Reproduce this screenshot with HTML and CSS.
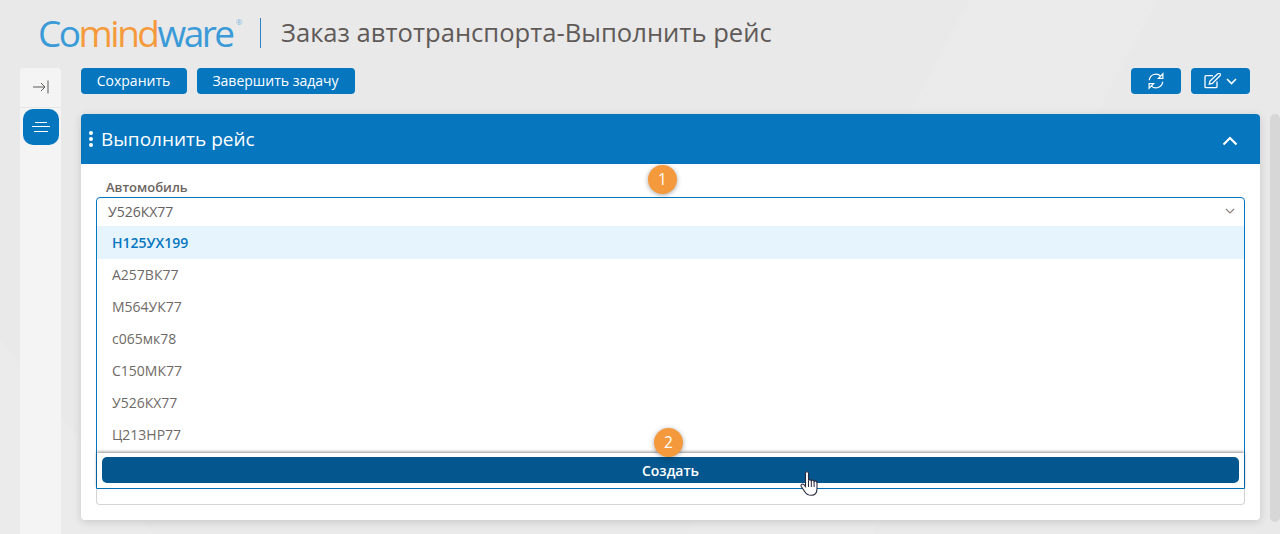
FILE: index.html
```html
<!DOCTYPE html>
<html lang="ru">
<head>
<meta charset="utf-8">
<title>Заказ автотранспорта-Выполнить рейс</title>
<link rel="stylesheet" href="styles.css">
</head>
<body>
<header class="header">
  <div class="logo"><span class="logo-blue">Co</span><span class="logo-orange">mind</span><span class="logo-blue">ware</span><sup class="logo-reg">®</sup></div>
  <div class="divider"></div>
  <h1 class="page-title">Заказ автотранспорта-Выполнить рейс</h1>
</header>
<div class="workspace">
  <aside class="sidebar">
    <button class="side-toggle" aria-label="Развернуть">
      <svg width="16" height="14" viewBox="0 0 16 14"><path d="M0 7h12M8 3l4 4-4 4M15 .5v13" fill="none" stroke="#5f5a58" stroke-width="1"/></svg>
    </button>
    <button class="side-active" aria-label="Меню">
      <svg width="18" height="12" viewBox="0 0 18 12"><path d="M3 1.500h12M0 5.500h18M2 10.500h14" fill="none" stroke="#fff" stroke-width="1"/></svg>
    </button>
  </aside>
  <main class="content">
    <div class="toolbar">
      <div class="toolbar-group">
        <button class="btn btn-save">Сохранить</button>
        <button class="btn btn-finish">Завершить задачу</button>
      </div>
      <div class="toolbar-group">
        <button class="btn btn-icon" aria-label="Обновить">
          <svg width="18" height="18" viewBox="0 0 18 18" fill="none" stroke="#fff" stroke-width="1.200"><path d="M2.300 8.200A6.700 6.700 0 0 1 13.800 4.200L15.300 6"/><path d="M15.900 1.800V6.300h-4.500z" fill="#0676bf"/><path d="M15.700 9.800A6.700 6.700 0 0 1 4.200 13.800L2.700 12"/><path d="M2.100 16.200V11.700h4.500z" fill="#0676bf"/></svg>
        </button>
        <button class="btn btn-edit" aria-label="Правка">
          <svg width="18" height="16" viewBox="0 0 18 16" fill="none" stroke="#fff" stroke-width="1.300"><path d="M13 8.500v5.200a1 1 0 0 1-1 1H2a1 1 0 0 1-1-1v-10a1 1 0 0 1 1-1h7"/><path d="M6 8l-.8 3.200L8.400 10.400 16 2.800a1.500 1.500 0 0 0-2.200-2.100z"/></svg>
          <svg width="11" height="7" viewBox="0 0 11 7" fill="none" stroke="#fff" stroke-width="1.600"><path d="M1 1l4.500 4.500L10 1"/></svg>
        </button>
      </div>
    </div>
    <section class="panel">
      <div class="panel-head">
        <div class="panel-title-wrap">
          <span class="grip"><i></i><i></i><i></i></span>
          <h2 class="panel-title">Выполнить рейс</h2>
        </div>
        <svg class="panel-chevron" width="16" height="10" viewBox="0 0 16 10" fill="none" stroke="#fff" stroke-width="2.200"><path d="M1.500 8.500L8 2l6.500 6.500"/></svg>
      </div>
      <div class="panel-body">
        <label class="field-label">Автомобиль</label>
        <div class="combo">
          <div class="combo-input">
            <span>У526КХ77</span>
            <svg width="10" height="6" viewBox="0 0 10 6" fill="none" stroke="#8a7f78" stroke-width="1.100"><path d="M1 1l4 4 4-4"/></svg>
          </div>
          <ul class="options">
            <li class="option option-active">Н125УХ199</li>
            <li class="option">А257ВК77</li>
            <li class="option">М564УК77</li>
            <li class="option">с065мк78</li>
            <li class="option">С150МК77</li>
            <li class="option">У526КХ77</li>
            <li class="option">Ц213НР77</li>
          </ul>
          <div class="combo-footer"><button class="btn-create">Создать</button></div>
        </div>
        <div class="under-field"></div>
      </div>
    </section>
  </main>
  <div class="scrollbar"></div>
</div>
<span class="badge badge-one">1</span>
<span class="badge badge-two">2</span>
<svg class="cursor" width="19" height="25" viewBox="0 0 19 25"><path d="M5.500 2.200C5.500.2 8.500.2 8.500 2.200V9.500C9 8.300 11 8.300 11.300 9.800 11.800 8.800 13.900 8.900 14.100 10.500 14.700 9.700 17 9.900 17 11.800V17.500C17 21.500 15 24.300 11.300 24.300 8 24.300 6.300 23 4.800 20.700L1.300 15.500C.3 13.800 2.300 12.300 3.700 13.500L5.500 15.500z" fill="#fff" stroke="#2a2a3c" stroke-width="1.100"/><path d="M8.500 9.500V16M11.300 9.800V16M14.100 10.500V16" fill="none" stroke="#2a2a3c" stroke-width="1"/></svg>
</body>
</html>
```
FILE: styles.css
```css
* { box-sizing: border-box; }
html, body { height: 100%; }
body {
  margin: 0;
  height: 534px;
  overflow: hidden;
  position: relative;
  font-family: "Open Sans", "Liberation Sans", sans-serif;
  color: #5f5a58;
  background:
    linear-gradient(118deg, rgba(255, 255, 255, 0) 0 62%, rgba(255, 255, 255, .07) 62% 74%, rgba(255, 255, 255, 0) 74%),
    linear-gradient(52deg, rgba(255, 255, 255, .08) 0 9%, rgba(255, 255, 255, 0) 9%),
    #e9e9e9;
}
button { font-family: inherit; border: 0; cursor: pointer; padding: 0; }
.header {
  height: 66px;
  display: flex;
  align-items: center;
  padding-left: 38px;
  margin-bottom: 2px;
}
.logo {
  font-weight: 400;
  font-size: 37px;
  letter-spacing: -2.5px;
  line-height: 44px;
  width: 202px;
  white-space: nowrap;
}
.logo-blue { color: #3b9ad8; }
.logo-orange { color: #f59a3c; }
.logo-reg {
  font-size: 8px;
  letter-spacing: 0;
  color: #7fb7dd;
  vertical-align: 22px;
  line-height: 0;
  margin-left: 3px;
}
.divider {
  width: 1px;
  height: 30px;
  background: #2c86c6;
  margin-left: 20px;
}
.page-title {
  margin: 0 0 0 20px;
  font-size: 25.6px;
  font-weight: 400;
  color: #5f5a58;
  line-height: 32px;
  white-space: nowrap;
}
.workspace {
  display: flex;
  height: 466px;
  padding-left: 20px;
}
.sidebar {
  width: 41px;
  flex: none;
  background: #f4f4f4;
  border-radius: 4px 4px 0 0;
  display: flex;
  flex-direction: column;
  align-items: center;
}
.side-toggle {
  width: 41px;
  height: 40px;
  padding-bottom: 2px;
  background: transparent;
  border-bottom: 1px solid #e6e6e6;
  display: flex;
  align-items: center;
  justify-content: center;
}
.side-active {
  width: 36px;
  height: 36px;
  margin-top: 1px;
  background: #0676bf;
  border-radius: 10px;
  display: flex;
  align-items: center;
  justify-content: center;
}
.content {
  width: 1179px;
  flex: none;
  margin-left: 20px;
}
.toolbar {
  display: flex;
  justify-content: space-between;
  height: 26px;
  margin-bottom: 20px;
}
.toolbar-group { display: flex; gap: 10px; }
.btn {
  height: 26px;
  padding-bottom: 2px;
  background: #0676bf;
  color: #fff;
  font-size: 14px;
  border-radius: 4px;
  display: flex;
  align-items: center;
  justify-content: center;
  white-space: nowrap;
}
.btn-save { width: 106px; padding-right: 1px; }
.btn-finish { width: 158px; padding-right: 1px; }
.btn-icon { width: 50px; padding-bottom: 0; }
.btn-edit { width: 59px; gap: 4px; margin-right: 10px; padding-bottom: 0; }
.panel {
  height: 406px;
  background: #fff;
  border-radius: 4px;
  box-shadow: 0 2px 8px rgba(0, 0, 0, .14);
}
.panel-head {
  height: 50px;
  background: #0676bf;
  border-radius: 4px 4px 0 0;
  display: flex;
  align-items: center;
  justify-content: space-between;
  padding: 0 22px 0 8px;
}
.panel-title-wrap { display: flex; align-items: center; gap: 8px; }
.grip { display: flex; flex-direction: column; gap: 2px; }
.grip i { display: block; width: 4px; height: 4px; background: #fff; border-radius: 50%; }
.panel-title {
  margin: 0;
  font-size: 19px;
  font-weight: 500;
  color: #fff;
  line-height: 26px;
}
.panel-chevron { display: block; margin-top: 3px; }
.panel-body { padding: 15px 15px 0; }
.field-label {
  display: block;
  font-size: 13px;
  font-weight: 600;
  color: #6b6461;
  line-height: 16px;
  padding: 0 0 2px 10px;
}
.combo {
  height: 292px;
  background: #fff;
  border: 1px solid #0676bf;
  border-radius: 4px 4px 0 0;
  position: relative;
  z-index: 1;
}
.combo-input {
  height: 28px;
  display: flex;
  align-items: center;
  justify-content: space-between;
  padding: 0 9px 2px 11px;
  font-size: 14px;
  color: #66605d;
}
.options { margin: 0; padding: 0; list-style: none; height: 227px; }
.option {
  height: 32px;
  line-height: 32px;
  padding-left: 15px;
  font-size: 14px;
  color: #6f6a67;
}
.option-active {
  height: 33px;
  line-height: 34px;
  background: #e6f4fd;
  color: #0676bf;
  font-weight: 600;
}
.combo-footer {
  height: 35px;
  padding: 4px 5px;
  background: #fff;
  box-shadow: 0 -1px 3px rgba(0, 0, 0, .45);
  position: relative;
}
.btn-create {
  display: block;
  width: 100%;
  height: 26px;
  background: #03578e;
  color: #fff;
  font-size: 14px;
  font-weight: 600;
  border-radius: 5px;
}
.under-field {
  height: 16px;
  border: 1px solid #d4d4d4;
  border-top: 0;
  border-radius: 0 0 4px 4px;
}
.scrollbar {
  width: 10px;
  height: 408px;
  margin: 46px 0 0 10px;
  flex: none;
  background: #d7d7d7;
  border-radius: 5px;
}
.badge {
  position: absolute;
  width: 29px;
  height: 29px;
  border-radius: 50%;
  background: #f59a3c;
  color: #fff;
  font-size: 15.5px;
  line-height: 29px;
  text-align: center;
  box-shadow: 0 1px 5px rgba(0, 0, 0, .35);
  z-index: 2;
}
.badge-one { left: 648px; top: 165px; }
.badge-two { left: 654px; top: 428px; }
.cursor { position: absolute; left: 800px; top: 471px; z-index: 3; }
```
